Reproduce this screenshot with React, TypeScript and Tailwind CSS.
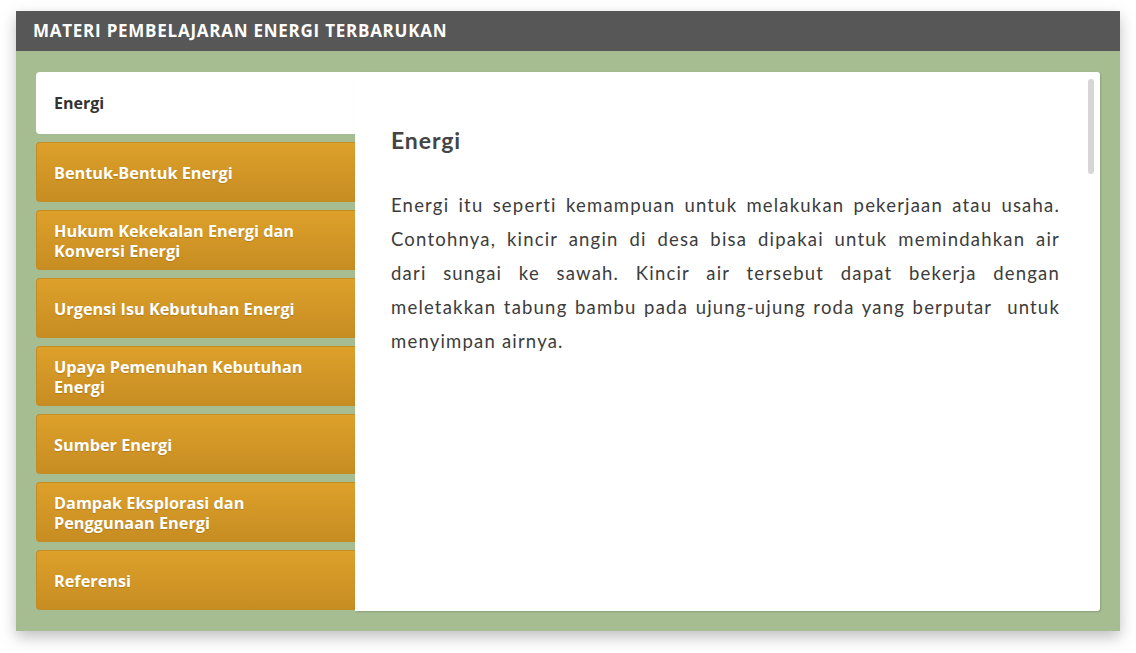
const tabs = [
  ['Bentuk-Bentuk Energi'],
  ['Hukum Kekekalan Energi dan', 'Konversi Energi'],
  ['Urgensi Isu Kebutuhan Energi'],
  ['Upaya Pemenuhan Kebutuhan', 'Energi'],
  ['Sumber Energi'],
  ['Dampak Eksplorasi dan', 'Penggunaan Energi'],
  ['Referensi'],
];

// the text is justified line by line so the breaks fall where they do in the original
const lines = [
  'Energi itu seperti kemampuan untuk melakukan pekerjaan atau usaha.',
  'Contohnya, kincir angin di desa bisa dipakai untuk memindahkan air',
  'dari sungai ke sawah. Kincir air tersebut dapat bekerja dengan',
  'meletakkan tabung bambu pada ujung-ujung roda yang berputar\u00a0 untuk',
];

export default function App() {
  return (
    <div className="w-[1136px] h-[653px] bg-white pt-[11px] pl-[16px]">
      <div className="w-[1104px] h-[620px] flex flex-col shadow-[0_6px_14px_rgba(0,0,0,0.25)]">
        <div className="h-[40px] bg-[#575757] flex items-center pl-[17px]">
          <span className="text-white font-bold text-[17px] tracking-[0.75px] font-['Open_Sans',sans-serif]">
            MATERI PEMBELAJARAN ENERGI TERBARUKAN
          </span>
        </div>
        <div className="flex-1 bg-[#a5bd91] pt-[21px] px-[20px] pb-[20px] flex">
          <div className="w-[319px] flex flex-col gap-[8px] font-['Open_Sans',sans-serif]">
            <div className="h-[62px] bg-white rounded-l-[4px] flex items-center pl-[18px] text-[16px] font-bold text-[#333]">
              Energi
            </div>
            {tabs.map((t) => (
              <div
                key={t[0]}
                className="h-[60px] rounded-l-[4px] border border-r-0 border-[#c48c24] bg-gradient-to-b from-[#dda02a] to-[#c78d22] flex flex-col justify-center pl-[17px] pt-[2px] text-white font-bold text-[16.3px] leading-[20px] [text-shadow:0_1px_1px_rgba(0,0,0,0.15)]"
              >
                {t.map((l) => (
                  <span key={l}>{l}</span>
                ))}
              </div>
            ))}
          </div>
          <div className="relative flex-1 bg-white rounded-r-[3px] shadow-[1px_1px_2px_rgba(0,0,0,0.15)] pl-[36px] pr-[40px] pt-[52px] font-['Lato',sans-serif] text-[#3c3c3c]">
            <div className="absolute right-[6px] top-[7px] w-[6px] h-[95px] rounded-full bg-[#d6d6d6]" />
            <h2 className="text-[23px] leading-[32px] font-bold tracking-[0.9px] text-[#444]">Energi</h2>
            <div className="mt-[32px] text-[18.5px] leading-[34px] tracking-[1.2px]">
              {lines.map((l) => (
                <p key={l} className="text-justify [text-align-last:justify]">
                  {l}
                </p>
              ))}
              <p>menyimpan airnya.</p>
            </div>
          </div>
        </div>
      </div>
    </div>
  );
}
